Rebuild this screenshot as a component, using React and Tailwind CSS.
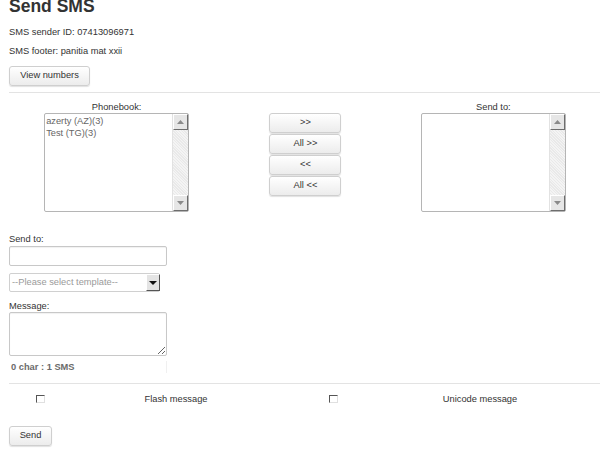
import React from 'react'

const btn =
  'border border-[#cfcfcf] rounded-[3px] bg-gradient-to-b from-white to-[#ececec] shadow-[0_1px_1px_rgba(0,0,0,0.12)] text-[#333] leading-none'

const Arrow = ({ up }) => (
  <svg width="7" height="4" viewBox="0 0 7 4">
    <polygon points={up ? '0,4 7,4 3.5,0' : '0,0 7,0 3.5,4'} fill="#8a8a8a" />
  </svg>
)

const ScrollBar = () => (
  <div className="w-[16px] h-full flex flex-col bg-[#eeeeee] border-l border-[#e2e2e2]">
    <div className="h-[16px] flex items-center justify-center bg-[#e6e6e6] border-r border-b border-[#6d6d6d] border-t border-l border-t-white border-l-white">
      <Arrow up />
    </div>
    <div className="flex-1 bg-[repeating-linear-gradient(45deg,#f4f4f4_0px,#f4f4f4_1px,#e9e9e9_1px,#e9e9e9_2px)]" />
    <div className="h-[16px] flex items-center justify-center bg-[#e6e6e6] border-r border-b border-[#6d6d6d] border-t border-l border-t-white border-l-white">
      <Arrow />
    </div>
  </div>
)

const ListBox = ({ items = [] }) => (
  <div className="w-[145px] h-[99px] border border-[#b5b5b5] rounded-[2px] bg-white flex">
    <div className="flex-1 pl-[1px] pt-[1px] text-[#666] leading-[12px]">
      {items.map((it) => (
        <div key={it}>{it}</div>
      ))}
    </div>
    <ScrollBar />
  </div>
)

const Check = () => (
  <span className="inline-block w-[9px] h-[8px] border-t border-l border-[#555] border-r border-b border-r-[#e0e0e0] border-b-[#e0e0e0] bg-white" />
)

export default function App() {
  return (
    <div className="pl-[9px] font-['Liberation_Sans',Arial,sans-serif] text-[9.3px] text-[#333] bg-white min-h-[457px] overflow-hidden">
      <h1 className="text-[17.5px] leading-[20px] font-bold -mt-[4px] text-[#333]">Send SMS</h1>
      <p className="mt-[7px] leading-[19px]">SMS sender ID: 07413096971</p>
      <p className="leading-[19px]">SMS footer: panitia mat xxii</p>
      <button className={`${btn} mt-[5px] h-[20px] w-[81px] block`}>View numbers</button>
      <div className="mt-[6px] border-t border-[#e3e3e3]" />

      <div className="flex items-start mt-[8px] -ml-[9px]">
        <div className="w-[225px] flex flex-col items-center pl-[9px]">
          <div className="leading-[12px]">Phonebook:</div>
          <ListBox items={['azerty (AZ)(3)', 'Test (TG)(3)']} />
        </div>
        <div className="w-[163px] flex flex-col items-center gap-[1px] mt-[12px]">
          {['>>', 'All >>', '<<', 'All <<'].map((t) => (
            <button key={t} className={`${btn} w-[72px] h-[20px]`}>
              {t}
            </button>
          ))}
        </div>
        <div className="w-[214px] flex flex-col items-center">
          <div className="leading-[12px]">Send to:</div>
          <ListBox />
        </div>
      </div>

      <div className="mt-[21px] leading-[12px]">Send to:</div>
      <div className="mt-[1px] w-[158px] h-[20px] border border-[#c8c8c8] rounded-[2px] shadow-[inset_0_1px_1px_rgba(0,0,0,0.06)] bg-white" />
      <div className="mt-[7px] w-[151px] h-[19px] border border-[#d0d0d0] rounded-[2px] flex items-center bg-white">
        <span className="flex-1 pl-[2px] text-[#9a9a9a]">--Please select template--</span>
        <span className="w-[14px] h-[17px] mr-[-1px] flex items-center justify-center bg-[#e4e4e4] border-t border-l border-t-white border-l-white border-r border-b border-r-[#555] border-b-[#555]">
          <svg width="8" height="4" viewBox="0 0 8 4">
            <polygon points="0,0 8,0 4,4" fill="#111" />
          </svg>
        </span>
      </div>
      <div className="mt-[8px] leading-[12px]">Message:</div>
      <textarea className="block w-[158px] h-[44px] border border-[#c8c8c8] rounded-[2px] shadow-[inset_0_1px_1px_rgba(0,0,0,0.06)] bg-white outline-none" />
      <div className="mt-[5px] leading-[12px] font-bold text-[#6b6b6b] pl-[2px] w-[158px] border-r border-[#f0f0f0]">
        0 char : 1 SMS
      </div>
      <div className="mt-[10px] border-t border-[#e3e3e3]" />

      <div className="flex items-center mt-[9px] -ml-[9px] leading-[12px]">
        <div className="w-[71px] flex justify-center pl-[9px]">
          <Check />
        </div>
        <div className="w-[210px] text-center">Flash message</div>
        <div className="w-[104px] flex justify-center">
          <Check />
        </div>
        <div className="w-[190px] text-center">Unicode message</div>
      </div>

      <button className={`${btn} mt-[21px] h-[20px] w-[43px] block`}>Send</button>
    </div>
  )
}
